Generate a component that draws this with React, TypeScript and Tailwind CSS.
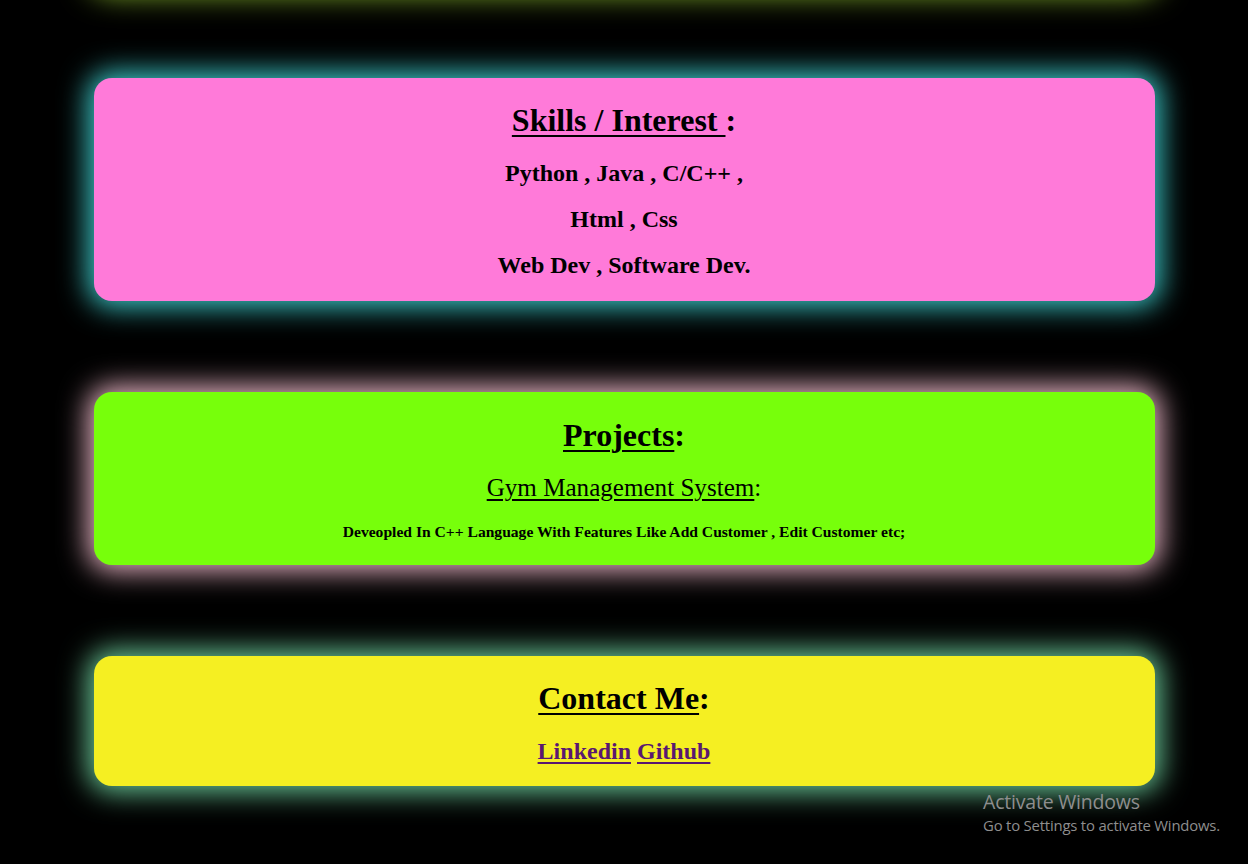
import React from "react";

const serif = { fontFamily: '"Liberation Serif", "Times New Roman", serif' };

export default function App() {
  return (
    <div className="min-h-[864px] bg-black overflow-hidden relative" style={serif}>
      <div className="flex flex-col items-center gap-[91px] -mt-[113px] pb-[80px]">
        {/* previous card, mostly above viewport */}
        <div className="w-[1061px] h-[100px] rounded-[18px] bg-[#77ff0b] shadow-[0_0_30px_6px_#9acd32]" />

        {/* Skills */}
        <div className="w-[1061px] h-[223px] rounded-[18px] bg-[#ff7ad9] shadow-[0_0_28px_6px_#3cc8c8] flex flex-col items-center text-black pt-[24px]">
          <div className="h-[36px] leading-[36px] text-[32px] font-bold">
            <span className="underline decoration-[2px] underline-offset-[4px]">Skills / Interest </span>:
          </div>
          <div className="mt-[12px] h-[46px] leading-[46px] text-[24px] font-bold">Python , Java , C/C++ ,</div>
          <div className="h-[46px] leading-[46px] text-[24px] font-bold">Html , Css</div>
          <div className="h-[46px] leading-[46px] text-[24px] font-bold">Web Dev , Software Dev.</div>
        </div>

        {/* Projects */}
        <div className="w-[1061px] h-[173px] rounded-[18px] bg-[#77ff0b] shadow-[0_0_28px_6px_#e8b4c4] flex flex-col items-center text-black pt-[25px]">
          <div className="h-[36px] leading-[36px] text-[32px] font-bold">
            <span className="underline decoration-[2px] underline-offset-[4px]">Projects</span>:
          </div>
          <div className="mt-[20px] h-[30px] leading-[30px] text-[25.1px] font-normal">
            <span className="underline decoration-[2px] underline-offset-[3px]">Gym Management System</span>:
          </div>
          <div className="mt-[19px] h-[20px] leading-[20px] text-[15.6px] font-bold">
            Deveopled In C++ Language With Features Like Add Customer , Edit Customer etc;
          </div>
        </div>

        {/* Contact */}
        <div className="w-[1061px] h-[130px] rounded-[18px] bg-[#f5ef22] shadow-[0_0_28px_6px_#6ac898] flex flex-col items-center text-black pt-[24px]">
          <div className="h-[36px] leading-[36px] text-[32px] font-bold">
            <span className="underline decoration-[2px] underline-offset-[4px]">Contact Me</span>:
          </div>
          <div className="mt-[20px] h-[30px] leading-[30px] text-[24px] font-bold">
            <a href="#" className="text-[#5a1870] underline decoration-[2px] underline-offset-[3px]">Linkedin</a>{" "}
            <a href="#" className="text-[#5a1870] underline decoration-[2px] underline-offset-[3px]">Github</a>
          </div>
        </div>
      </div>

      {/* Windows activation watermark */}
      <div className="absolute left-[983px] top-[792px] text-[#8e8e8e] leading-none" style={{ fontFamily: '"Open Sans", "Noto Sans", sans-serif' }}>
        <div className="text-[19.5px] tracking-[-0.2px]">Activate Windows</div>
        <div className="text-[14.9px] mt-[6px] tracking-[-0.2px]">Go to Settings to activate Windows.</div>
      </div>
    </div>
  );
}
